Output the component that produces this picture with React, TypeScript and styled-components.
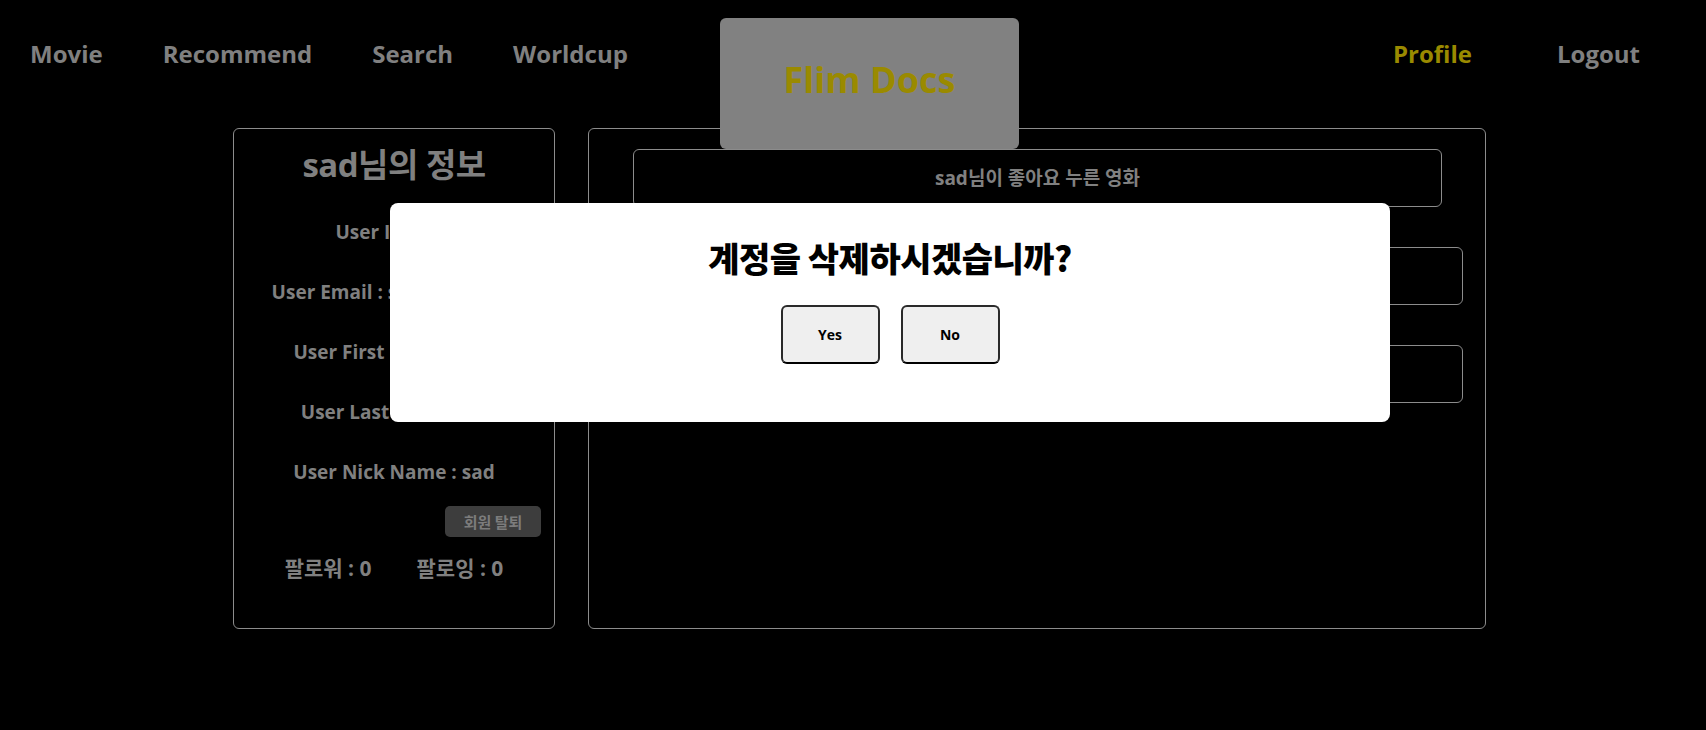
import React from "react";
import styled, { createGlobalStyle } from "styled-components";

const GlobalStyle = createGlobalStyle`
  html, body {
    margin: 0;
    padding: 0;
    background: #000;
  }
  body {
    font-family: "Open Sans", "Noto Sans CJK KR", sans-serif;
    font-weight: 700;
    color: #808080;
    width: 1706px;
    height: 730px;
    overflow: hidden;
  }
`;

const Page = styled.div`
  position: relative;
  width: 1706px;
  height: 730px;
  background: #000;
`;

const Header = styled.header`
  display: flex;
  align-items: flex-start;
  height: 128px;
  padding: 0 66px 0 30px;
  box-sizing: border-box;
`;

const NavGroup = styled.nav<{ $gap: number; $width?: number; $right?: boolean }>`
  display: flex;
  gap: ${(p) => p.$gap}px;
  ${(p) => (p.$width ? `width: ${p.$width}px;` : "")}
  ${(p) => (p.$right ? "margin-left: auto;" : "")}
`;

const NavLink = styled.a<{ $active?: boolean }>`
  margin-top: 38px;
  font-size: 24px;
  line-height: 32px;
  color: ${(p) => (p.$active ? "#9a8a00" : "#808080")};
  text-decoration: none;
  cursor: pointer;
`;

const Logo = styled.div`
  position: relative;
  z-index: 1;
  width: 299px;
  height: 131px;
  margin-top: 18px;
  background: #818181;
  border-radius: 6px;
  display: flex;
  align-items: center;
  justify-content: center;
  font-size: 36px;
  color: #9a8a00;
  padding-bottom: 8px;
  box-sizing: border-box;
`;

const Main = styled.main`
  display: flex;
  gap: 33px;
  padding-left: 233px;
`;

const Card = styled.section<{ $width: number }>`
  width: ${(p) => p.$width}px;
  height: 501px;
  box-sizing: border-box;
  border: 1px solid #8c8c8c;
  border-radius: 6px;
`;

const InfoCard = styled(Card)`
  display: flex;
  flex-direction: column;
  align-items: center;
  padding-top: 16px;
`;

const InfoTitle = styled.h2`
  margin: 0;
  font-size: 33px;
  line-height: 40px;
  letter-spacing: -0.5px;
  color: #808080;
`;

const InfoList = styled.div`
  display: flex;
  flex-direction: column;
  align-items: center;
  gap: 34px;
  margin-top: 34px;
`;

const InfoLine = styled.div`
  font-size: 19px;
  line-height: 26px;
  color: #808080;
  white-space: nowrap;
`;

const WithdrawRow = styled.div`
  align-self: stretch;
  display: flex;
  justify-content: flex-end;
  padding-right: 13px;
  margin-top: 21px;
`;

const WithdrawButton = styled.button`
  width: 96px;
  height: 31px;
  border: none;
  border-radius: 5px;
  background: #3d3d3d;
  color: #7c7c7c;
  font-family: "Noto Sans CJK KR", sans-serif;
  font-weight: 700;
  font-size: 15px;
  padding: 0;
`;

const FollowRow = styled.div`
  display: flex;
  gap: 45px;
  margin-top: 17px;
`;

const FollowText = styled.span`
  font-size: 21px;
  line-height: 28px;
  color: #808080;
  white-space: nowrap;
`;

const LikedCard = styled(Card)`
  display: flex;
  flex-direction: column;
  gap: 40px;
  padding: 20px 0 0 44px;
`;

const Box = styled.div<{ $width: number }>`
  width: ${(p) => p.$width}px;
  height: 58px;
  box-sizing: border-box;
  border: 1px solid #8c8c8c;
  border-radius: 6px;
  display: flex;
  align-items: center;
  justify-content: center;
  font-size: 19px;
  color: #808080;
  padding-bottom: 2px;
`;

const Modal = styled.div`
  position: absolute;
  left: 390px;
  top: 203px;
  width: 1000px;
  height: 219px;
  background: #fff;
  border-radius: 8px;
  display: flex;
  flex-direction: column;
  align-items: center;
  padding-top: 31px;
  box-sizing: border-box;
`;

const ModalTitle = styled.h3`
  margin: 0;
  font-family: "Noto Sans CJK KR", sans-serif;
  font-weight: 900;
  font-size: 34px;
  line-height: 48px;
  color: #000;
  letter-spacing: -0.5px;
`;

const ModalButtons = styled.div`
  display: flex;
  gap: 21px;
  margin-top: 23px;
`;

const ModalButton = styled.button`
  width: 99px;
  height: 59px;
  background: #efefef;
  border: 2px solid #2a2a2a;
  border-bottom-color: #000;
  border-radius: 6px;
  font-family: "Open Sans", sans-serif;
  font-weight: 700;
  font-size: 14px;
  color: #000;
  padding: 0;
`;

export default function App() {
  return (
    <>
      <GlobalStyle />
      <Page>
        <Header>
          <NavGroup $gap={60} $width={690}>
            <NavLink>Movie</NavLink>
            <NavLink>Recommend</NavLink>
            <NavLink>Search</NavLink>
            <NavLink>Worldcup</NavLink>
          </NavGroup>
          <Logo>Flim Docs</Logo>
          <NavGroup $gap={85} $right>
            <NavLink $active>Profile</NavLink>
            <NavLink>Logout</NavLink>
          </NavGroup>
        </Header>
        <Main>
          <InfoCard $width={322}>
            <InfoTitle>sad님의 정보</InfoTitle>
            <InfoList>
              <InfoLine>User ID : sad</InfoLine>
              <InfoLine>User Email : sad@sad.com</InfoLine>
              <InfoLine>User First Name : sad</InfoLine>
              <InfoLine>User Last Name : sa</InfoLine>
              <InfoLine>User Nick Name : sad</InfoLine>
            </InfoList>
            <WithdrawRow>
              <WithdrawButton>회원 탈퇴</WithdrawButton>
            </WithdrawRow>
            <FollowRow>
              <FollowText>팔로워 : 0</FollowText>
              <FollowText>팔로잉 : 0</FollowText>
            </FollowRow>
          </InfoCard>
          <LikedCard $width={898}>
            <Box $width={809}>sad님이 좋아요 누른 영화</Box>
            <Box $width={830} />
            <Box $width={830} />
          </LikedCard>
        </Main>
        <Modal>
          <ModalTitle>계정을 삭제하시겠습니까?</ModalTitle>
          <ModalButtons>
            <ModalButton>Yes</ModalButton>
            <ModalButton>No</ModalButton>
          </ModalButtons>
        </Modal>
      </Page>
    </>
  );
}
